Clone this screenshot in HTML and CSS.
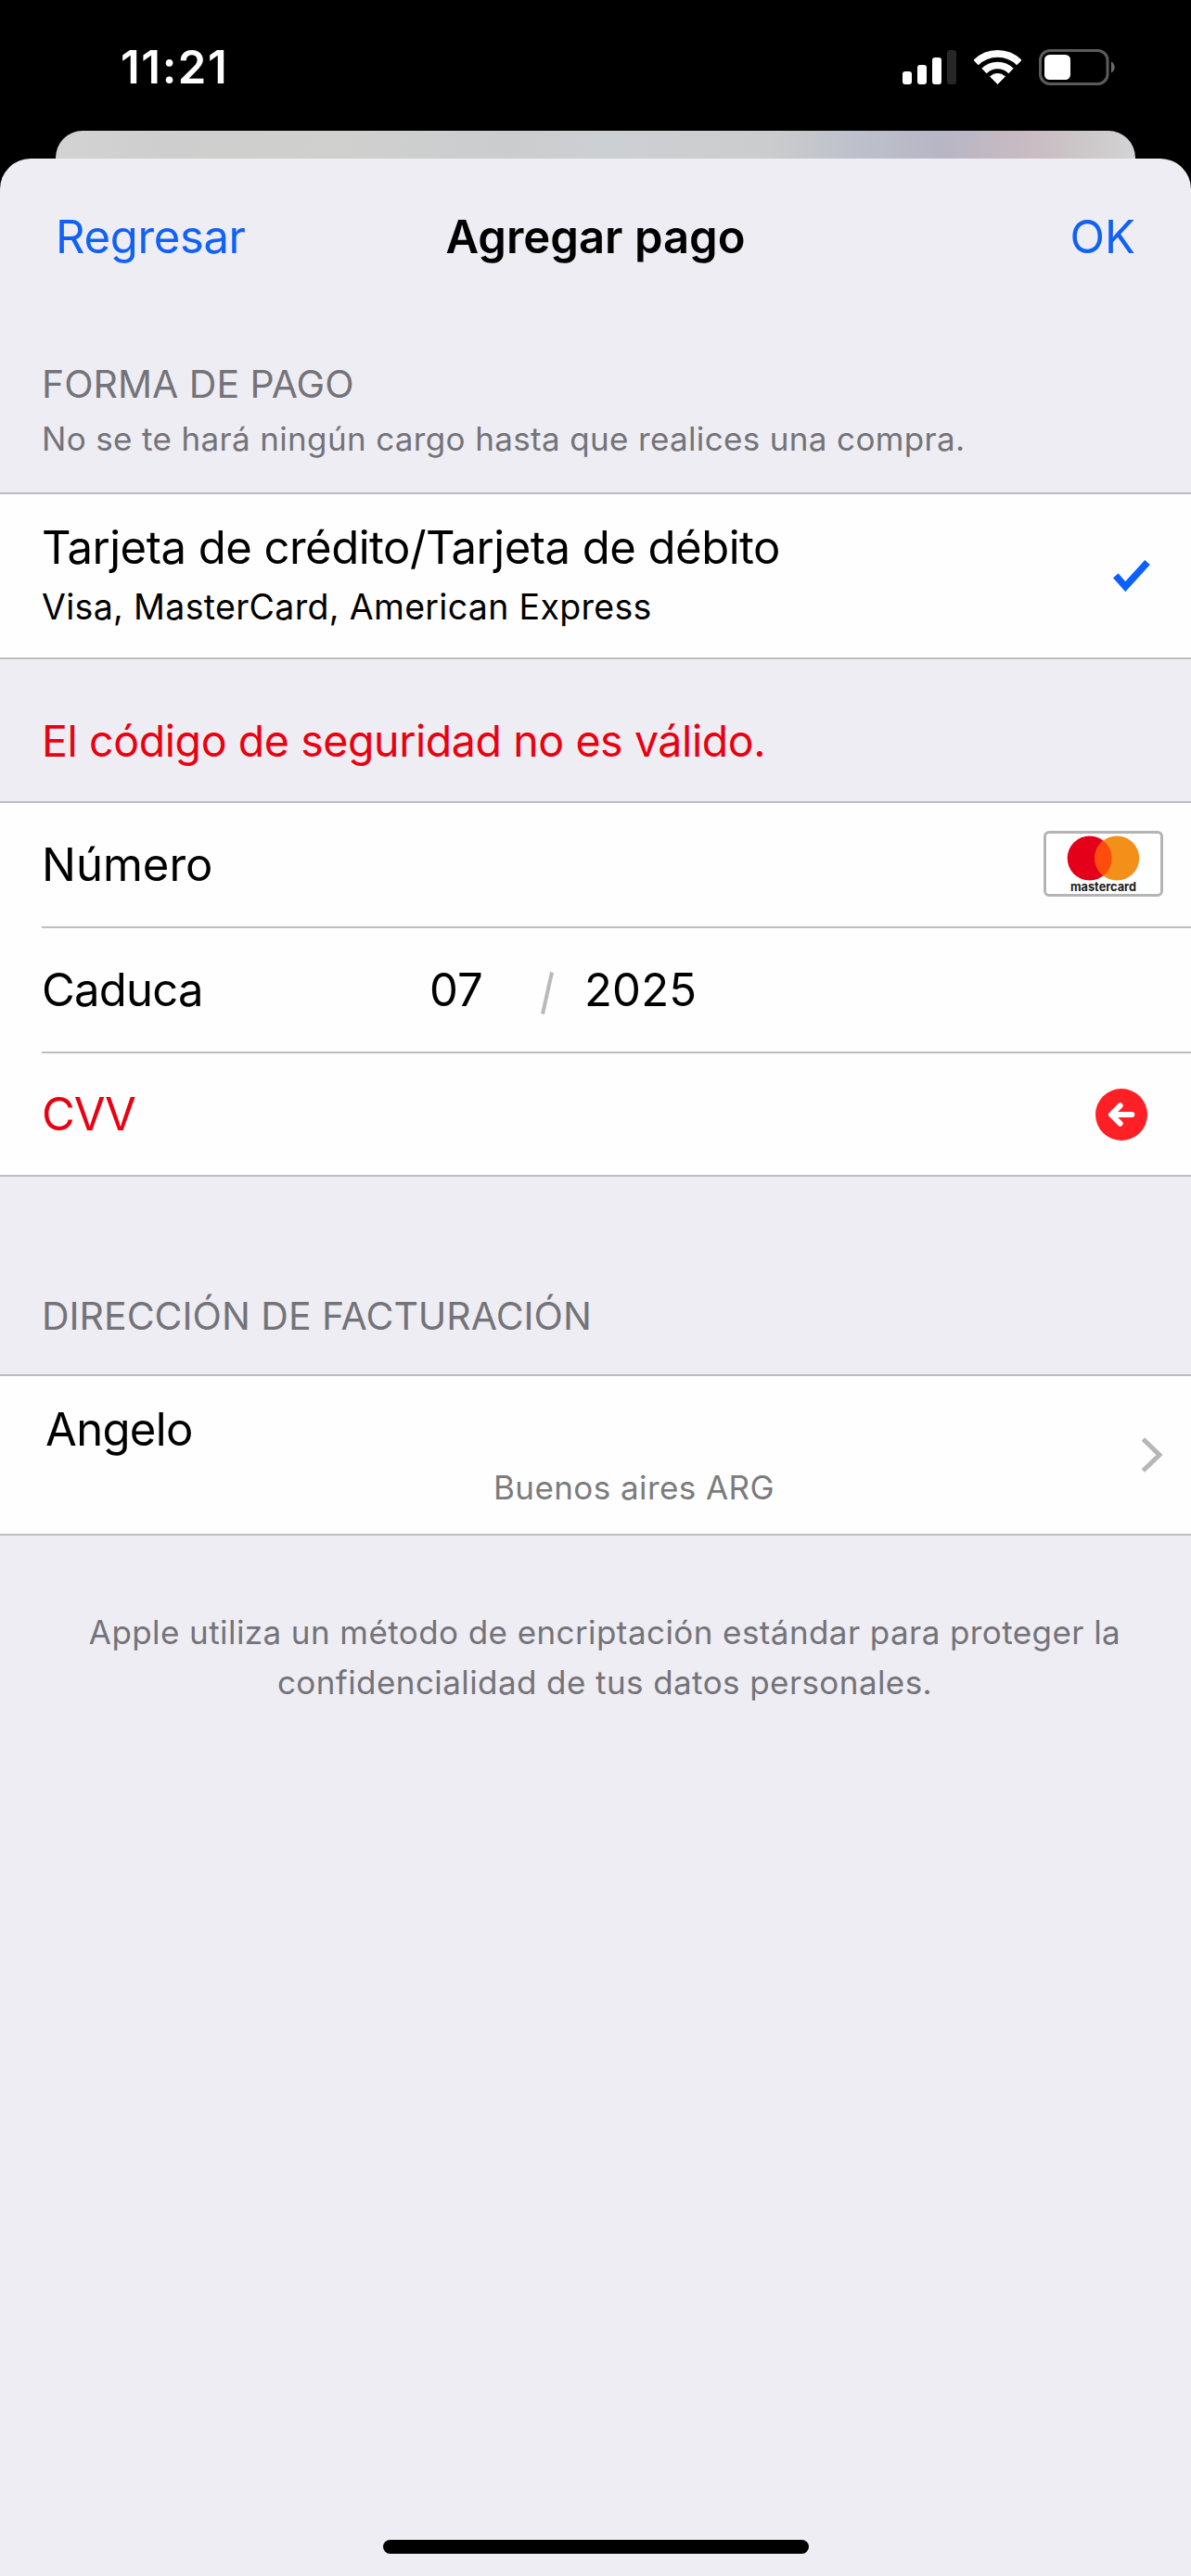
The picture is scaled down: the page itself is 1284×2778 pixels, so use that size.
FILE: index.html
```html
<!DOCTYPE html>
<html lang="es">
<head>
<meta charset="utf-8">
<title>Agregar pago</title>
<link rel="stylesheet" href="styles.css">
</head>
<body>
<div class="screen">
  <header class="status">
    <span class="time">11:21</span>
    <div class="status-icons">
      <svg width="58" height="39" viewBox="0 0 58 39">
        <rect x="0" y="24" width="10" height="14" rx="3" fill="#fff"/>
        <rect x="16" y="17" width="10" height="21" rx="3" fill="#fff"/>
        <rect x="32" y="9" width="10" height="29" rx="3" fill="#fff"/>
        <rect x="48" y="1" width="10" height="37" rx="3" fill="#272727"/>
      </svg>
      <svg width="51" height="39" viewBox="0 0 51 39">
        <path d="M2.1 14.6A33.1 33.1 0 0 1 48.9 14.6M11 23.5A20.5 20.5 0 0 1 40 23.5" fill="none" stroke="#fff" stroke-width="7.6"/>
        <path d="M17.6 29.5A11.7 11.7 0 0 1 33.4 29.5L25.5 37.5Z" fill="#fff" stroke="#fff" stroke-width="1" stroke-linejoin="round"/>
      </svg>
      <svg width="82" height="39" viewBox="0 0 82 39">
        <rect x="1.5" y="1.5" width="72.5" height="36" rx="10.5" fill="none" stroke="#5b5b5b" stroke-width="3"/>
        <rect x="6" y="6" width="28" height="27" rx="5.5" fill="#fff"/>
        <path d="M78 13.5A6.8 6.8 0 0 1 78 25.5Z" fill="#6a6a6a"/>
      </svg>
    </div>
  </header>
  <div class="sheet-behind"></div>
  <main class="sheet">
    <nav class="nav">
      <a class="nav-back">Regresar</a>
      <h1 class="nav-title">Agregar pago</h1>
      <a class="nav-ok">OK</a>
    </nav>

    <div class="section-head">
      <h2 class="caption">FORMA DE PAGO</h2>
      <p class="note">No se te hará ningún cargo hasta que realices una compra.</p>
    </div>
    <section class="group method">
      <div class="method-text">
        <div class="method-title">Tarjeta de crédito/Tarjeta de débito</div>
        <div class="method-sub">Visa, MasterCard, American Express</div>
      </div>
      <svg width="40" height="34" viewBox="0 0 40 34">
        <path d="M2.8 16.8L13.3 28.6L37 2.4" fill="none" stroke="#0b60ff" stroke-width="7.4"/>
      </svg>
    </section>

    <p class="error">El código de seguridad no es válido.</p>
    <section class="group">
      <div class="row">
        <span class="label">Número</span>
        <svg class="brand" width="129" height="71" viewBox="0 0 129 71">
          <rect x="1.5" y="1.5" width="126" height="68" rx="4.5" fill="#fff" stroke="#b4b4b4" stroke-width="3"/>
          <circle cx="49.7" cy="29.5" r="24" fill="#e40019"/>
          <circle cx="79.2" cy="29.5" r="24" fill="#f48f19"/>
          <path d="M64.45 10.57A24 24 0 0 1 64.45 48.43A24 24 0 0 1 64.45 10.57Z" fill="#ff4b0b"/>
          <text class="brand-name" x="29" y="65.3" textLength="71" lengthAdjust="spacingAndGlyphs">mastercard</text>
        </svg>
      </div>
      <div class="row">
        <span class="label expiry">Caduca</span>
        <span class="month">07</span>
        <svg class="slash" width="14" height="46" viewBox="0 0 14 46">
          <path d="M2 45.5L12 .5" stroke="#b9b9b9" stroke-width="4"/>
        </svg>
        <span class="year">2025</span>
      </div>
      <div class="row">
        <span class="label invalid">CVV</span>
        <svg class="clear" width="56" height="56" viewBox="0 0 56 56">
          <circle cx="28" cy="28" r="28" fill="#ff2026"/>
          <path d="M39.3 28H18M26.6 18.3L17 28L26.6 37.7" fill="none" stroke="#fff" stroke-width="6" stroke-linecap="round" stroke-linejoin="round"/>
        </svg>
      </div>
    </section>

    <div class="section-head billing">
      <h2 class="caption">DIRECCIÓN DE FACTURACIÓN</h2>
    </div>
    <section class="group address">
      <div>
        <div class="address-name">Angelo</div>
        <div class="address-city">Buenos aires ARG</div>
      </div>
      <svg width="24" height="38" viewBox="0 0 24 38">
        <path d="M2.4 2L20 19L2.4 36" fill="none" stroke="#b6b6b6" stroke-width="5"/>
      </svg>
    </section>

    <p class="footer">Apple utiliza un método de encriptación estándar para proteger la<br>confidencialidad de tus datos personales.</p>
    <div class="home-indicator"></div>
  </main>
</div>
</body>
</html>
```
FILE: styles.css
```css
* { box-sizing: border-box; }

body {
  margin: 0;
  background: #000;
  font-family: "Inter", "Liberation Sans", sans-serif;
  font-size: 49px;
  line-height: 60px;
  color: #000;
}

h1, h2, p { margin: 0; font-weight: 400; }

svg { display: block; flex: none; }

.screen {
  display: flex;
  flex-direction: column;
  width: 1284px;
  height: 2778px;
}

/* Status bar */
.status {
  display: flex;
  align-items: center;
  justify-content: space-between;
  height: 141px;
  padding: 4px 82px 0 130px;
}

.time {
  color: #fff;
  font-weight: 600;
  letter-spacing: 1.6px;
}

.status-icons { display: flex; gap: 19px; }

/* Sheets */
.sheet-behind {
  height: 30px;
  margin: 0 60px;
  border-radius: 29px 29px 0 0;
  background: linear-gradient(90deg, #d3d3d3 0%, #cecece 10%, #d0d0cf 26%, #cbccce 42%, #cdd0d3 51%, #cbcccd 66%, #bdc1cb 74%, #b8b6c5 82%, #c9bbc2 90%, #ccc7c8 95%, #d3d3d5 100%);
}

.sheet {
  display: flex;
  flex: 1;
  flex-direction: column;
  border-radius: 33px 33px 0 0;
  background: #eeedf3;
}

.nav {
  display: grid;
  grid-template-columns: 1fr auto 1fr;
  align-items: center;
  height: 169px;
  padding: 1px 60px 0;
  color: #1061f6;
}

.nav-back { letter-spacing: -.35px; }

.nav-title {
  color: #000;
  font-size: 49px;
  font-weight: 600;
}

.nav-ok { justify-self: end; }

/* Section captions */
.section-head { padding: 49px 45px 36px; color: #747379; }

.billing { padding: 125px 45px 38px; }

.caption {
  font-size: 41px;
  line-height: 50px;
}

.note {
  margin-top: 12px;
  font-size: 35px;
  line-height: 44px;
  letter-spacing: .35px;
}

/* Grouped cells */
.group {
  border-top: 2px solid #bdbcc1;
  border-bottom: 2px solid #bdbcc1;
  background: #fefefe;
}

.method {
  display: flex;
  align-items: center;
  justify-content: space-between;
  height: 180px;
  padding: 0 44px 0 45px;
}

.method-text { margin-bottom: 3px; }

.method-title { letter-spacing: -.51px; }

.method-sub {
  margin-top: 11px;
  font-size: 37.5px;
  line-height: 46px;
  letter-spacing: .32px;
}

.error {
  padding: 60px 45px 37px;
  color: #ea0010;
  font-size: 46.5px;
  line-height: 56px;
  letter-spacing: -.42px;
}

.row {
  display: flex;
  align-items: center;
  height: 135px;
  margin-left: 45px;
  padding-right: 30px;
  border-bottom: 2px solid #bfbfc1;
}

.row:last-child { height: 131px; border-bottom: 0; }

.label { flex: 0 0 418px; }

.expiry { letter-spacing: -.75px; }

.invalid { color: #ea0010; letter-spacing: -1.1px; }

.brand { margin: 0 0 2px auto; }

.brand-name { fill: #1c1c1c; font-size: 13px; font-weight: 700; }

.month { flex: 0 0 120px; }

.slash { margin: 7px 33px 0 0; }

.year { letter-spacing: .2px; }

.clear { margin: 0 17px 0 auto; }

.address {
  display: flex;
  align-items: center;
  justify-content: space-between;
  height: 174px;
  padding: 0 30px 0 49px;
}

.address-name { letter-spacing: -.65px; }

.address-city {
  margin-top: 10px;
  padding-left: 483px;
  color: #7b7b7d;
  font-size: 35px;
  line-height: 44px;
  letter-spacing: .42px;
}

.footer {
  padding: 77px 0 0 20px;
  color: #747379;
  font-size: 35px;
  line-height: 54px;
  letter-spacing: .42px;
  text-align: center;
}

.home-indicator {
  width: 459px;
  height: 15px;
  margin: auto auto 24px;
  border-radius: 8px;
  background: #000;
}
```
